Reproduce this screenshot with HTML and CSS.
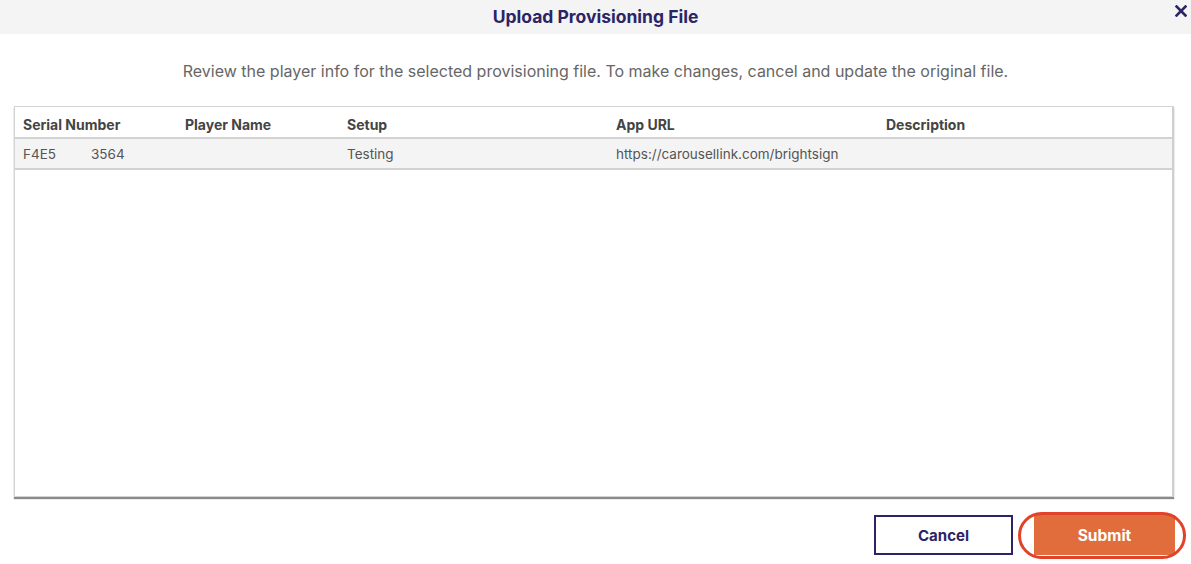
FILE: index.html
```html
<!DOCTYPE html>
<html lang="en">
<head>
    <meta charset="UTF-8">
    <meta name="viewport" content="width=device-width, initial-scale=1.0">
    <title>Upload Provisioning File</title>
    <link rel="stylesheet" href="styles.css">
</head>
<body>
    <div class="modal">
        <div class="modal-header">
            <h1>Upload Provisioning File</h1>
            <button class="close" aria-label="Close">
                <svg width="12" height="12" viewBox="0 0 12 12"><path d="M1.5 1.5 L10.5 10.5 M10.5 1.5 L1.5 10.5" stroke="#2b2466" stroke-width="2.6" stroke-linecap="square"/></svg>
            </button>
        </div>

        <p class="intro">Review the player info for the selected provisioning file. To make changes, cancel and update the original file.</p>

        <div class="grid">
            <div class="row head">
                <div>Serial Number</div>
                <div>Player Name</div>
                <div>Setup</div>
                <div>App URL</div>
                <div>Description</div>
            </div>
            <div class="row item">
                <div>F4E5<span class="masked"></span>3564</div>
                <div></div>
                <div>Testing</div>
                <div>https://carousellink.com/brightsign</div>
                <div></div>
            </div>
        </div>

        <div class="actions">
            <button class="btn cancel">Cancel</button>
            <span class="highlight"><button class="btn submit">Submit</button></span>
        </div>
    </div>
</body>
</html>
```

FILE: styles.css
```css
body { margin: 0; font-family: Inter, "Liberation Sans", Arial, sans-serif; background: #fff; color: #444; }
.modal { width: 1191px; height: 564px; position: relative; }
.modal-header { height: 34px; background: #f4f4f4; display: flex; align-items: center; justify-content: center; position: relative; }
.modal-header h1 { margin: 0 0 2px; font-size: 17.5px; font-weight: 700; color: #2b2466; }
.close { position: absolute; right: 4px; top: 5px; border: 0; background: none; padding: 0; width: 12px; height: 12px; line-height: 0; }
.intro { margin: 28px 0 0; text-align: center; font-size: 16px; color: #666; line-height: 19px; }
.grid { margin: 25px 17px 0 14px; height: 391px; border: 1px solid #d4d4d4; border-right: 2px solid #cfcfcf; box-shadow: 0 2px 1px #8a8a8a; box-sizing: border-box; }
.row { display: grid; grid-template-columns: 162px 162px 269px 270px 1fr; align-items: center; }
.row > div { padding-left: 8px; font-size: 13.5px; white-space: nowrap; }
.head { height: 30px; border-bottom: 2px solid #d2d2d2; color: #444; }
.head > div { padding-top: 4px; font-size: 14px; font-weight: 700; }
.item { height: 29px; background: #f4f4f4; border-bottom: 2px solid #d2d2d2; color: #555; }
.masked { display: inline-block; width: 35px; }
.actions { display: flex; justify-content: flex-end; align-items: center; gap: 21px; margin: 18px 16px 0 0; }
.btn { font-family: inherit; font-size: 15px; font-weight: 700; cursor: pointer; }
.cancel { width: 139px; height: 40px; background: #fff; border: 2px solid #2b2466; color: #2b2466; }
.submit { width: 141px; height: 40px; background: #e06d3b; border: 0; color: #fff; font-size: 15.5px; }
.highlight { position: relative; display: inline-block; line-height: 0; }
.highlight::after { content: ""; position: absolute; left: -16px; right: -11px; top: -3px; bottom: -4px; border: 3px solid #e2412a; border-radius: 24px; }
```
